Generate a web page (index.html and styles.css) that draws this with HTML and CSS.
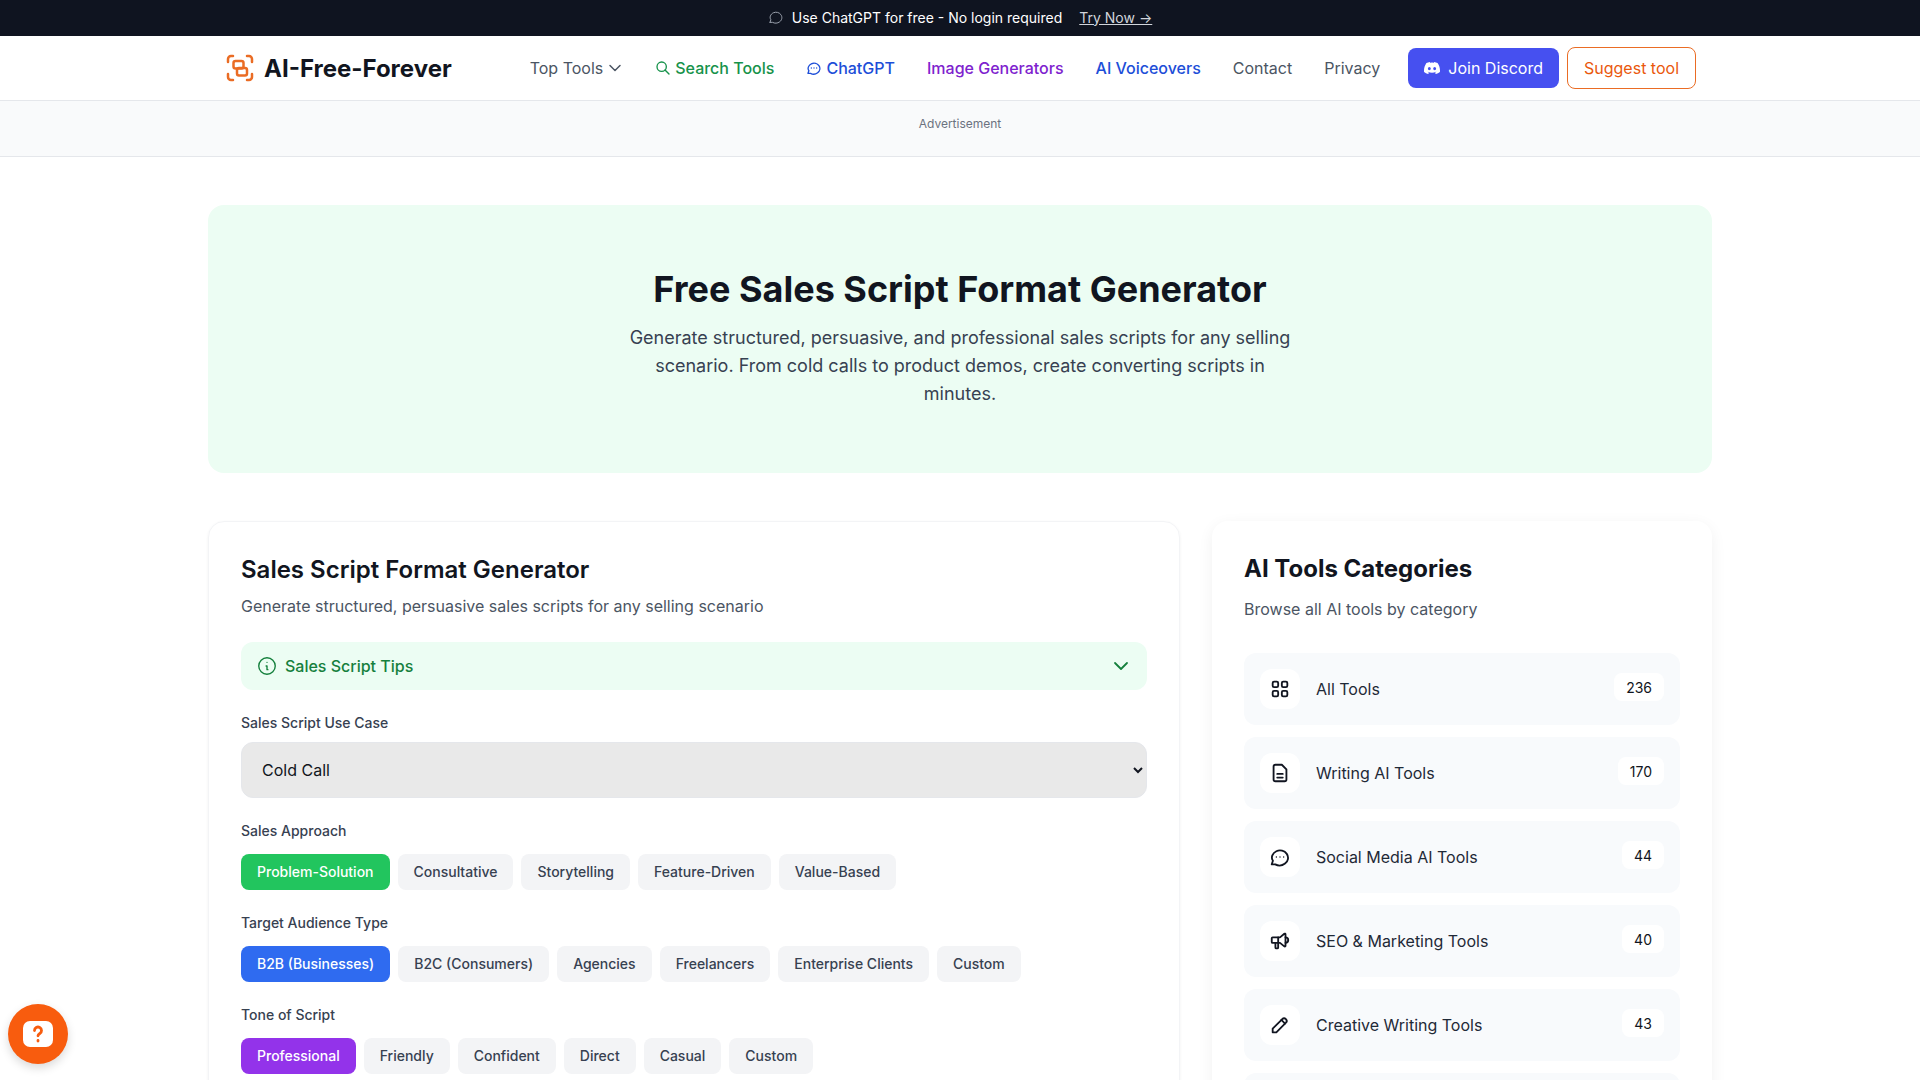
FILE: index.html
```html
<!DOCTYPE html>
<html lang="en">
<head>
    <meta charset="UTF-8">
    <meta name="viewport" content="width=device-width, initial-scale=1.0">
    <title>Free Sales Script Format Generator</title>
    <link rel="stylesheet" href="styles.css">
</head>
<body>
    <div class="promo-bar">
        <svg class="promo-icon" viewBox="0 0 24 24"><path d="M3 20l1.3-3.9C1.7 12.6 3.9 7.6 8 5.7c4.100-1.900 9-.6 11.400 2.900 2.400 3.500 1.600 8-1.900 10.600-3.300 2.500-7.600 2.600-10.700.8L3 20"/></svg>
        <span>Use ChatGPT for free - No login required</span>
        <a class="promo-link" href="#">Try Now →</a>
    </div>

    <header class="site-header">
        <nav class="nav">
            <a class="logo" href="#">
                <svg class="logo-icon" viewBox="0 0 32 32">
                    <path d="M9 4H7a3 3 0 0 0-3 3v3M23 4h2a3 3 0 0 1 3 3v3M9 28H7a3 3 0 0 1-3-3v-3M23 28h2a3 3 0 0 0 3-3v-3"/>
                    <rect x="9.500" y="9" width="10" height="7.500" rx="2"/>
                    <rect x="13" y="16" width="10" height="7.500" rx="2"/>
                </svg>
                <span>AI-Free-Forever</span>
            </a>
            <div class="nav-links">
                <a class="nav-link" href="#">Top Tools
                    <svg class="chevron" viewBox="0 0 24 24"><path d="M6 9l6 6 6-6"/></svg>
                </a>
                <a class="nav-link green" href="#">
                    <svg class="nav-icon" viewBox="0 0 24 24"><circle cx="10" cy="10" r="7"/><path d="M21 21l-6-6"/></svg>
                    Search Tools</a>
                <a class="nav-link blue" href="#">
                    <svg class="nav-icon" viewBox="0 0 24 24"><path d="M3 20l1.300-3.900C1.700 12.600 3.900 7.600 8 5.700c4.100-1.900 9-.6 11.400 2.900 2.400 3.500 1.600 8-1.900 10.600-3.300 2.500-7.600 2.600-10.700.8L3 20"/><path d="M8 12h.01M12 12h.01M16 12h.01"/></svg>
                    ChatGPT</a>
                <a class="nav-link purple" href="#">Image Generators</a>
                <a class="nav-link blue" href="#">AI Voiceovers</a>
                <a class="nav-link" href="#">Contact</a>
                <a class="nav-link" href="#">Privacy</a>
            </div>
            <div class="nav-buttons">
                <a class="btn-discord" href="#">
                    <svg class="discord-icon" viewBox="0 0 24 24"><path d="M20.317 4.37a19.791 19.791 0 0 0-4.885-1.515.074.074 0 0 0-.079.037c-.21.375-.444.864-.608 1.25a18.27 18.27 0 0 0-5.487 0 12.64 12.64 0 0 0-.617-1.25.077.077 0 0 0-.079-.037A19.736 19.736 0 0 0 3.677 4.37a.07.07 0 0 0-.032.027C.533 9.046-.32 13.58.099 18.057a.082.082 0 0 0 .031.057 19.9 19.9 0 0 0 5.993 3.03.078.078 0 0 0 .084-.028 14.09 14.09 0 0 0 1.226-1.994.076.076 0 0 0-.041-.106 13.107 13.107 0 0 1-1.872-.892.077.077 0 0 1-.008-.128 10.2 10.2 0 0 0 .372-.292.074.074 0 0 1 .077-.01c3.928 1.793 8.18 1.793 12.062 0a.074.074 0 0 1 .078.01c.12.098.246.198.373.292a.077.077 0 0 1-.006.127 12.299 12.299 0 0 1-1.873.892.077.077 0 0 0-.041.107c.36.698.772 1.362 1.225 1.993a.076.076 0 0 0 .084.028 19.839 19.839 0 0 0 6.002-3.03.077.077 0 0 0 .032-.054c.5-5.177-.838-9.674-3.549-13.66a.061.061 0 0 0-.031-.03zM8.02 15.33c-1.183 0-2.157-1.085-2.157-2.419 0-1.333.956-2.419 2.157-2.419 1.21 0 2.176 1.096 2.157 2.42 0 1.333-.956 2.418-2.157 2.418zm7.975 0c-1.183 0-2.157-1.085-2.157-2.419 0-1.333.955-2.419 2.157-2.419 1.21 0 2.176 1.096 2.157 2.42 0 1.333-.946 2.418-2.157 2.418z"/></svg>
                    Join Discord</a>
                <a class="btn-suggest" href="#">Suggest tool</a>
            </div>
        </nav>
    </header>

    <div class="ad-strip">Advertisement</div>

    <main class="page">
        <section class="hero">
            <h1>Free Sales Script Format Generator</h1>
            <p>Generate structured, persuasive, and professional sales scripts for any selling scenario. From cold calls to product demos, create converting scripts in minutes.</p>
        </section>

        <div class="columns">
            <section class="generator card">
                <h2>Sales Script Format Generator</h2>
                <p class="generator-sub">Generate structured, persuasive sales scripts for any selling scenario</p>

                <div class="tips">
                    <svg class="tips-icon" viewBox="0 0 24 24"><circle cx="12" cy="12" r="9"/><path d="M12 8h.01M11 12h1v4h1"/></svg>
                    <span>Sales Script Tips</span>
                    <svg class="tips-chevron" viewBox="0 0 24 24"><path d="M6 9l6 6 6-6"/></svg>
                </div>

                <label class="field-label" for="useCase">Sales Script Use Case</label>
                <select class="use-case" id="useCase">
                    <option>Cold Call</option>
                    <option>Product Demo</option>
                    <option>Follow Up</option>
                </select>

                <div class="field-label chip-label">Sales Approach</div>
                <div class="chips">
                    <button class="chip chip-green">Problem-Solution</button>
                    <button class="chip">Consultative</button>
                    <button class="chip">Storytelling</button>
                    <button class="chip">Feature-Driven</button>
                    <button class="chip">Value-Based</button>
                </div>

                <div class="field-label chip-label">Target Audience Type</div>
                <div class="chips">
                    <button class="chip chip-blue">B2B (Businesses)</button>
                    <button class="chip">B2C (Consumers)</button>
                    <button class="chip">Agencies</button>
                    <button class="chip">Freelancers</button>
                    <button class="chip">Enterprise Clients</button>
                    <button class="chip">Custom</button>
                </div>

                <div class="field-label chip-label">Tone of Script</div>
                <div class="chips">
                    <button class="chip chip-purple">Professional</button>
                    <button class="chip">Friendly</button>
                    <button class="chip">Confident</button>
                    <button class="chip">Direct</button>
                    <button class="chip">Casual</button>
                    <button class="chip">Custom</button>
                </div>
            </section>

            <aside class="categories">
                <h2>AI Tools Categories</h2>
                <p class="categories-sub">Browse all AI tools by category</p>

                <ul class="category-list">
                    <li class="category">
                        <span class="category-icon"><svg viewBox="0 0 24 24"><rect x="4" y="4" width="6" height="6" rx="1.500"/><rect x="14" y="4" width="6" height="6" rx="1.500"/><rect x="4" y="14" width="6" height="6" rx="1.500"/><rect x="14" y="14" width="6" height="6" rx="1.500"/></svg></span>
                        <span class="category-name">All Tools</span>
                        <span class="category-count">236</span>
                    </li>
                    <li class="category">
                        <span class="category-icon"><svg viewBox="0 0 24 24"><path d="M17 21H7a2 2 0 0 1-2-2V5a2 2 0 0 1 2-2h7l5 5v11a2 2 0 0 1-2 2z"/><path d="M9 13h6M9 17h6"/></svg></span>
                        <span class="category-name">Writing AI Tools</span>
                        <span class="category-count">170</span>
                    </li>
                    <li class="category">
                        <span class="category-icon"><svg viewBox="0 0 24 24"><path d="M3 20l1.300-3.900C1.700 12.600 3.900 7.600 8 5.700c4.100-1.900 9-.6 11.400 2.900 2.400 3.500 1.600 8-1.900 10.600-3.300 2.500-7.600 2.600-10.700.8L3 20"/><path class="dots" d="M8 12h.01M12 12h.01M16 12h.01"/></svg></span>
                        <span class="category-name">Social Media AI Tools</span>
                        <span class="category-count">44</span>
                    </li>
                    <li class="category">
                        <span class="category-icon"><svg viewBox="0 0 24 24"><path d="M18 8a3 3 0 0 1 0 6"/><path d="M10 8v11a1 1 0 0 1-1 1H8a1 1 0 0 1-1-1v-5"/><path d="M12 8l4.700-3.900A.8.8 0 0 1 18 4.700v12.600a.8.8 0 0 1-1.300.6L12 14H4a1 1 0 0 1-1-1V9a1 1 0 0 1 1-1h8"/></svg></span>
                        <span class="category-name">SEO &amp; Marketing Tools</span>
                        <span class="category-count">40</span>
                    </li>
                    <li class="category">
                        <span class="category-icon"><svg viewBox="0 0 24 24"><path d="M4 20h4L18.500 9.500a2.830 2.830 0 0 0-4-4L4 16v4"/><path d="M13.500 6.500l4 4"/></svg></span>
                        <span class="category-name">Creative Writing Tools</span>
                        <span class="category-count">43</span>
                    </li>
                    <li class="category"></li>
                </ul>
            </aside>
        </div>
    </main>

    <button class="help-btn" aria-label="Help">
        <svg viewBox="0 0 30 26"><rect class="help-bubble" width="30" height="26" rx="7"/><path class="help-mark" d="M11.500 9.500a3.500 3.500 0 1 1 5.300 3c-1.200.8-1.800 1.200-1.800 2.300M15 19.500v.5"/></svg>
    </button>
</body>
</html>
```

FILE: styles.css
```css
* {
    margin: 0;
    padding: 0;
    box-sizing: border-box;
}

html, body {
    height: 1080px;
    overflow: hidden;
}

body {
    font-family: Inter, 'Noto Sans', sans-serif;
    color: #111520;
    background: #fff;
}

a {
    text-decoration: none;
    color: inherit;
}

svg {
    fill: none;
    stroke: currentColor;
    stroke-width: 2;
    stroke-linecap: round;
    stroke-linejoin: round;
}

/* top banner */
.promo-bar {
    height: 36px;
    padding-bottom: 2px;
    display: flex;
    align-items: center;
    justify-content: center;
    gap: 8px;
    background: #0f1420;
    color: #fff;
    font-size: 14px;
}

.promo-icon {
    width: 16px;
    height: 16px;
    stroke-width: 1.500;
    color: #9ca3af;
}

.promo-link {
    margin-left: 9px;
    color: #d1d5db;
    text-decoration: underline;
}

/* header */
.site-header {
    height: 65px;
    border-bottom: 1px solid #e5e7eb;
    background: #fff;
}

.nav {
    max-width: 1536px;
    height: 64px;
    margin: 0 auto;
    padding: 0 32px;
    display: flex;
    align-items: center;
}

.logo {
    display: flex;
    align-items: center;
    gap: 8px;
    font-size: 24px;
    font-weight: 700;
}

.logo-icon {
    width: 32px;
    height: 32px;
    color: #ea6c24;
    stroke-width: 2.500;
}

.nav-links {
    display: flex;
    align-items: center;
    gap: 32px;
    margin-left: auto;
    margin-right: 28px;
}

.nav-link {
    display: flex;
    align-items: center;
    gap: 4px;
    font-size: 16px;
    color: #4b5563;
}

.nav-icon {
    width: 16px;
    height: 16px;
}

.chevron {
    width: 20px;
    height: 20px;
    margin-left: -2px;
    margin-right: -2px;
    stroke-width: 1.800;
}

.green {
    color: #16924a;
    font-weight: 500;
}

.purple {
    color: #7e22ce;
    font-weight: 500;
}

.blue {
    color: #1d4ed8;
    font-weight: 500;
}

.nav-buttons {
    display: flex;
    align-items: center;
    gap: 8px;
}

.btn-discord {
    height: 40px;
    display: flex;
    align-items: center;
    gap: 8px;
    padding: 0 16px;
    border-radius: 8px;
    background: #4650f0;
    color: #fff;
    font-size: 16px;
}

.discord-icon {
    width: 16px;
    height: 16px;
    fill: currentColor;
    stroke: none;
}

.btn-suggest {
    height: 42px;
    display: flex;
    align-items: center;
    padding: 0 16px;
    border: 1px solid #ea6c24;
    border-radius: 8px;
    color: #ea580c;
    font-size: 16px;
}

.ad-strip {
    height: 56px;
    padding-top: 15px;
    border-bottom: 1px solid #e5e7eb;
    background: #f9fafb;
    color: #6b7280;
    font-size: 12px;
    line-height: 16px;
    text-align: center;
}

/* page */
.page {
    max-width: 1536px;
    margin: 0 auto;
    padding: 48px 16px 0;
}

.hero {
    height: 268px;
    padding-top: 64px;
    border-radius: 16px;
    background: #ecfdf3;
    text-align: center;
}

.hero h1 {
    font-size: 36px;
    line-height: 40px;
    font-weight: 700;
    margin-bottom: 15px;
}

.hero p {
    max-width: 672px;
    margin: 0 auto;
    font-size: 18px;
    line-height: 28px;
    color: #374151;
}

.columns {
    display: grid;
    grid-template-columns: 972px 500px;
    gap: 32px;
    margin-top: 48px;
}

.card {
    border: 1px solid #f3f4f6;
    border-radius: 16px;
    box-shadow: 0 1px 3px rgba(0, 0, 0, 0.06);
}

.generator {
    padding: 32px;
    height: 900px;
}

.generator h2 {
    font-size: 24px;
    line-height: 32px;
    font-weight: 600;
    margin-bottom: 8px;
}

.generator-sub {
    font-size: 16px;
    line-height: 24px;
    color: #4b5563;
    margin-bottom: 24px;
}

.tips {
    height: 48px;
    display: flex;
    align-items: center;
    gap: 8px;
    padding: 0 16px;
    border-radius: 12px;
    background: #ecfdf3;
    color: #15803d;
    font-size: 16px;
    font-weight: 500;
    margin-bottom: 24px;
}

.tips-icon {
    width: 22px;
    height: 22px;
    margin-left: -1px;
    margin-right: -1px;
    stroke-width: 1.500;
}

.tips-chevron {
    width: 24px;
    height: 24px;
    margin-left: auto;
    margin-right: -2px;
    stroke-width: 1.800;
}

.field-label {
    display: block;
    font-size: 14px;
    line-height: 18px;
    font-weight: 500;
    color: #374151;
    margin-bottom: 10px;
}

.chip-label {
    margin-bottom: 14px;
}

.use-case {
    display: block;
    width: 100%;
    height: 56px;
    padding: 0 16px;
    border: 1px solid #e5e7eb;
    border-radius: 12px;
    background-color: #e9e9e9;
    color: #111520;
    font-family: inherit;
    font-size: 16px;
    margin-bottom: 24px;
}

.chips {
    display: flex;
    gap: 8px;
    margin-bottom: 24px;
}

.chip {
    height: 36px;
    padding: 0 16px 2px;
    border: none;
    border-radius: 8px;
    background: #f3f4f6;
    color: #374151;
    font-family: inherit;
    font-size: 14px;
    font-weight: 500;
}

.chip-green {
    background: #22c55e;
    color: #fff;
}

.chip-blue {
    background: #2f6bf0;
    color: #fff;
}

.chip-purple {
    background: #9333ea;
    color: #fff;
}

/* sidebar */
.categories {
    height: 900px;
    padding: 32px;
    border-radius: 16px;
    box-shadow: 0 4px 16px rgba(0, 0, 0, 0.06);
}

.categories h2 {
    font-size: 24px;
    line-height: 32px;
    font-weight: 700;
    margin-bottom: 12px;
}

.categories-sub {
    font-size: 16px;
    line-height: 24px;
    color: #4b5563;
    margin-bottom: 32px;
}

.category-list {
    list-style: none;
    display: flex;
    flex-direction: column;
    gap: 12px;
}

.category {
    height: 72px;
    display: flex;
    align-items: center;
    gap: 16px;
    padding: 0 16px;
    border-radius: 12px;
    background: #f8fafc;
}

.category-icon {
    width: 40px;
    height: 40px;
    display: flex;
    align-items: center;
    justify-content: center;
    border-radius: 12px;
    background: #fff;
    color: #111520;
}

.category-icon svg {
    width: 22px;
    height: 22px;
}

.category-icon .dots {
    stroke-width: 1.500;
}

.category-name {
    font-size: 16px;
    color: #1f2937;
}

.category-count {
    height: 28px;
    margin-left: auto;
    margin-top: -4px;
    padding: 0 12px;
    display: flex;
    align-items: center;
    border-radius: 8px;
    background: #fff;
    font-size: 14px;
}

/* floating help */
.help-btn {
    position: fixed;
    left: 8px;
    bottom: 16px;
    width: 60px;
    height: 60px;
    display: flex;
    align-items: center;
    justify-content: center;
    border: none;
    border-radius: 50%;
    background: #f85c0e;
    box-shadow: 0 4px 10px rgba(0, 0, 0, 0.15);
}

.help-btn svg {
    width: 30px;
    height: 26px;
}

.help-bubble {
    fill: #fff;
    stroke: none;
}

.help-mark {
    stroke: #f85c0e;
    stroke-width: 2.800;
}
```
